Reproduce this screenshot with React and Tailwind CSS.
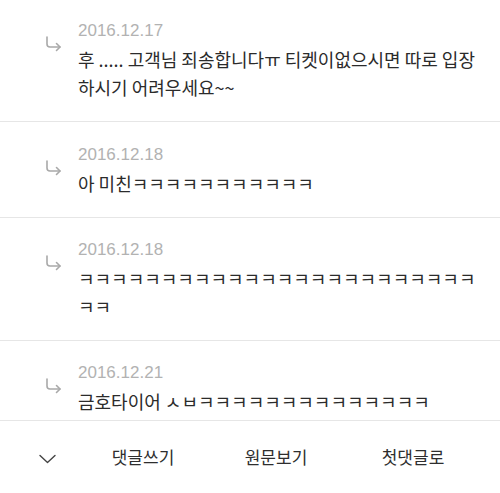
import React from 'react';

const comments = [
  { date: '2016.12.17', lines: ['후 ..... 고객님 죄송합니다ㅠ 티켓이없으시면 따로 입장', '하시기 어려우세요~~'], pt: 'pt-[21px]', pb: 'pb-[20px]' },
  { date: '2016.12.18', lines: ['아 미친' + 'ㅋ'.repeat(11)], pt: 'pt-[23px]', pb: 'pb-[20px]' },
  { date: '2016.12.18', lines: ['ㅋ'.repeat(24), 'ㅋㅋ'], pt: 'pt-[22px]', pb: 'pb-[20px]' },
  { date: '2016.12.21', lines: ['금호타이어 ㅅㅂ' + 'ㅋ'.repeat(14)], pt: 'pt-[22px]', pb: 'pb-[5px]' },
];

function ReplyArrow() {
  return (
    <svg width="18" height="16" viewBox="0 0 18 16" fill="none" stroke="#a9a9a9" strokeWidth="1.6" strokeLinecap="round" strokeLinejoin="round">
      <path d="M2 1 V8 Q2 11 5 11 H15" />
      <path d="M11.5 7.5 L15 11 L11.5 14.5" />
    </svg>
  );
}

function Chevron() {
  return (
    <svg width="17" height="10" viewBox="0 0 17 10" fill="none" stroke="#444" strokeWidth="1.4" strokeLinecap="round" strokeLinejoin="round">
      <path d="M1 1.5 L8.5 8.5 L16 1.5" />
    </svg>
  );
}

export default function App() {
  return (
    <div className="w-[500px] h-[493px] bg-white overflow-hidden flex flex-col font-['Noto_Sans_CJK_KR','Noto_Sans',sans-serif] text-[#2b2b2b]">
      {/* comment list */}
      <div className="flex-1">
        {comments.map((c, i) => (
          <div key={i} className={`flex pl-[45px] pr-4 border-b border-[#e6e6e6] ${c.pt} ${c.pb}`}>
            <div className="w-[33px] shrink-0 pt-[15px]">
              <ReplyArrow />
            </div>
            <div>
              <div className="h-[20px] leading-[20px] text-[17px] text-[#b2b2b2] font-['Liberation_Sans',sans-serif]">{c.date}</div>
              <div className="mt-[4px] text-[18px] leading-[28px] whitespace-nowrap">
                {c.lines.map((l, j) => (
                  <div key={j}>{l}</div>
                ))}
              </div>
            </div>
          </div>
        ))}
      </div>

      {/* bottom toolbar */}
      <div className="h-[72px] shrink-0 flex items-center text-[17px] text-[#2e2e2e]">
        <div className="w-[93px] flex justify-center pl-[2px] pt-[3px]">
          <Chevron />
        </div>
        <div className="w-[100px] text-center">댓글쓰기</div>
        <div className="w-[33px]" />
        <div className="w-[100px] text-center">원문보기</div>
        <div className="w-[37px]" />
        <div className="w-[100px] text-center">첫댓글로</div>
      </div>
    </div>
  );
}
